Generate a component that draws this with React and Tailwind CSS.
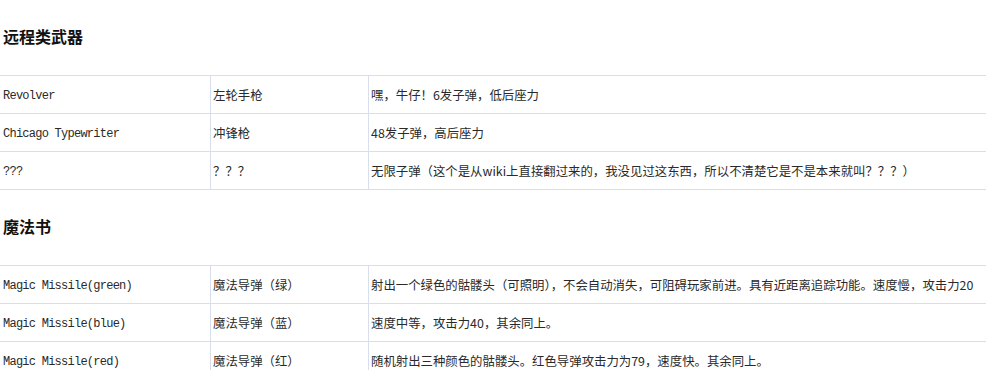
import React from "react";

const cjk = "font-['Noto_Sans_CJK_SC',sans-serif]";

const sections = [
  {
    title: "远程类武器",
    rows: [
      ["Revolver", "左轮手枪", "嘿，牛仔！6发子弹，低后座力"],
      ["Chicago Typewriter", "冲锋枪", "48发子弹，高后座力"],
      ["???", "？？？", "无限子弹（这个是从wiki上直接翻过来的，我没见过这东西，所以不清楚它是不是本来就叫？？？）"],
    ],
  },
  {
    title: "魔法书",
    rows: [
      ["Magic Missile(green)", "魔法导弹（绿）", "射出一个绿色的骷髅头（可照明），不会自动消失，可阻碍玩家前进。具有近距离追踪功能。速度慢，攻击力20"],
      ["Magic Missile(blue)", "魔法导弹（蓝）", "速度中等，攻击力40，其余同上。"],
      ["Magic Missile(red)", "魔法导弹（红）", "随机射出三种颜色的骷髅头。红色导弹攻击力为79，速度快。其余同上。"],
    ],
  },
];

export default function App() {
  return (
    <div className="w-[986px] h-[370px] overflow-hidden bg-white text-[#2a2a2a]">
      {sections.map((s, i) => (
        <div key={i}>
          <div className="h-[75px] flex items-center pl-[3px] pb-[3px]">
            <h2 className={`${cjk} text-[16px] font-bold text-[#111] leading-none`}>{s.title}</h2>
          </div>
          <div className="border-t border-[#d8deec]">
            {s.rows.map((r, j) => (
              <div key={j} className="grid grid-cols-[210px_158px_1fr] h-[38px] border-b border-[#d8deec]">
                <div className="flex items-center pl-[3px] pt-[3px] whitespace-nowrap font-['Liberation_Mono',monospace] text-[12px] tracking-[-0.75px]">
                  {r[0]}
                </div>
                <div className={`flex items-center pl-[2px] pt-[2px] whitespace-nowrap border-l border-[#d8deec] ${cjk} text-[12.4px]`}>
                  {r[1]}
                </div>
                <div className={`flex items-center pl-[2px] pt-[2px] whitespace-nowrap border-l border-[#d8deec] ${cjk} text-[12.4px]`}>
                  {r[2]}
                </div>
              </div>
            ))}
          </div>
        </div>
      ))}
    </div>
  );
}
